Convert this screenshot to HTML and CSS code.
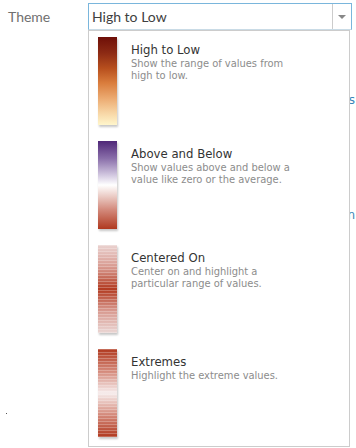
FILE: index.html
```html
<!DOCTYPE html>
<html>
<head>
<meta charset="utf-8">
<link rel="stylesheet" href="styles.css">
</head>
<body>
<div class="page">
  <div class="field">
    <label class="label">Theme</label>
    <div class="select">
      <span class="select-value">High to Low</span>
      <span class="select-btn"><span class="caret"></span></span>
    </div>
  </div>
  <div class="behind">
    <div class="link l1">Styles</div>
    <div class="link l2">Selection</div>
  </div>
  <div class="dot"></div>

  <div class="menu">
    <div class="item">
      <div class="ramp r-high"></div>
      <div class="info">
        <div class="title">High to Low</div>
        <div class="desc">Show the range of values from high to low.</div>
      </div>
    </div>
    <div class="item">
      <div class="ramp r-above"></div>
      <div class="info">
        <div class="title">Above and Below</div>
        <div class="desc">Show values above and below a value like zero or the average.</div>
      </div>
    </div>
    <div class="item">
      <div class="ramp r-center"></div>
      <div class="info">
        <div class="title">Centered On</div>
        <div class="desc">Center on and highlight a particular range of values.</div>
      </div>
    </div>
    <div class="item">
      <div class="ramp r-extreme"></div>
      <div class="info">
        <div class="title">Extremes</div>
        <div class="desc">Highlight the extreme values.</div>
      </div>
    </div>
  </div>
</div>
</body>
</html>
```
FILE: styles.css
```css
html, body {
  margin: 0;
  padding: 0;
  background: #fff;
  width: 356px;
  height: 448px;
  overflow: hidden;
}
.page {
  position: relative;
  width: 356px;
  height: 448px;
}
.field {
  display: flex;
  align-items: center;
  padding: 3px 0 0 8px;
}
.label {
  width: 80px;
  font-family: Lato, "Open Sans", sans-serif;
  font-size: 14px;
  color: #707070;
}
.select {
  display: flex;
  width: 262px;
  height: 25px;
  border: 1px solid #7ab6dc;
  border-bottom-color: #c9dbe6;
  background: #fff;
}
.select-value {
  flex: 1;
  padding-left: 3px;
  font-family: Lato, "Open Sans", sans-serif;
  font-size: 14px;
  line-height: 25px;
  color: #404040;
}
.select-btn {
  width: 18px;
  border-left: 1px solid #cccccc;
  display: flex;
  align-items: center;
  justify-content: center;
}
.caret {
  width: 0;
  height: 0;
  border-left: 4px solid transparent;
  border-right: 4px solid transparent;
  border-top: 4px solid #888;
  margin-top: 1px;
}
.behind {
  display: flex;
  flex-direction: column;
  align-items: flex-end;
  padding-right: 1px;
  font-family: "DejaVu Sans", sans-serif;
  font-size: 12px;
  color: #3a86b8;
}
.l1 { margin-top: 63px; }
.l2 { margin-top: 101px; }
.dot {
  margin: 191px 0 0 6px;
  width: 1px;
  height: 1px;
  background: #555;
}
.menu {
  position: absolute;
  left: 88px;
  top: 30px;
  width: 262px;
  height: 417px;
  border: 1px solid #cccccc;
  background: #fff;
  padding: 6px 0 0 9px;
  box-sizing: border-box;
  display: flex;
  flex-direction: column;
  gap: 16px;
}
.item {
  display: flex;
  gap: 14px;
}
.ramp {
  flex: none;
  width: 19px;
  height: 88px;
  box-shadow: 1px 2px 2px rgba(0, 0, 0, 0.22);
}
.info {
  padding-top: 5px;
}
.title {
  font-family: "DejaVu Sans Condensed", "DejaVu Sans", sans-serif;
  font-size: 13px;
  line-height: 16px;
  color: #333;
}
.desc {
  font-family: "DejaVu Sans Condensed", "DejaVu Sans", sans-serif;
  font-size: 11px;
  line-height: 12px;
  color: #8c8c8c;
  width: 162px;
}
.r-high {
  background: linear-gradient(to bottom, #6e0f08 0%, #8c2a14 18%, #b8501e 36%, #d97c3c 52%, #ecab72 70%, #f7d5a4 86%, #fff6cc 100%);
}
.r-above {
  background: linear-gradient(to bottom, #4f2778 0%, #8a6faa 20%, #cfc4de 38%, #ffffff 50%, #eccfc9 62%, #d38a7c 78%, #b0391f 100%);
}
.r-center {
  background:
    repeating-linear-gradient(to bottom, rgba(255,255,255,0.25) 0 1px, rgba(255,255,255,0) 1px 3px),
    linear-gradient(to bottom, #ead2d0 0%, #d89a90 25%, #b23a20 50%, #d89a90 75%, #ead6d4 100%);
}
.r-extreme {
  background:
    repeating-linear-gradient(to bottom, rgba(255,255,255,0.25) 0 1px, rgba(255,255,255,0) 1px 3px),
    linear-gradient(to bottom, #b0391f 0%, #d4897a 25%, #f6ecec 50%, #d4897a 75%, #b0391f 100%);
}
```
